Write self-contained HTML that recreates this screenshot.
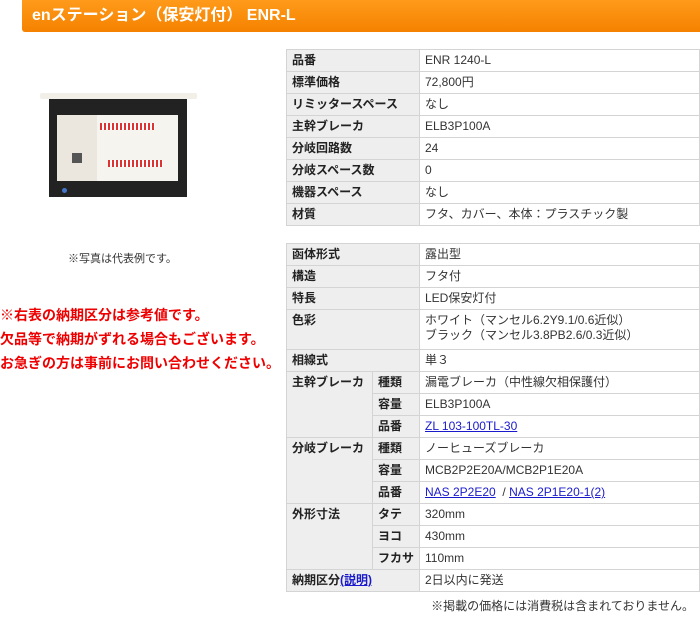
<!DOCTYPE html>
<html><head><meta charset="utf-8"><style>
body{margin:0;width:700px;height:626px;background:#fff;font-family:"Liberation Sans","Noto Sans CJK JP",sans-serif;position:relative;overflow:hidden}
.hd{position:absolute;left:22px;top:0;width:678px;height:32px;background:linear-gradient(#ff9a1a,#f58200);border-radius:0 0 0 3px;color:#fff;font-weight:bold;font-size:16px;line-height:32px;padding-left:10px;box-sizing:border-box}
table{position:absolute;border-collapse:collapse;font-size:12px;color:#333}
td{border:1px solid #d4d4d4;padding:0 5px;height:21px;vertical-align:top;line-height:21px}
td.l{background:#eee;font-weight:bold;color:#222}
a{color:#1a1acc;text-decoration:underline}
.red{position:absolute;left:0;color:#e00;font-weight:bold;font-size:14px;line-height:24px;top:303px}
.note{position:absolute;font-size:11px;color:#333}
</style></head><body>
<div class="hd">enステーション（保安灯付） ENR-L</div>

<div style="position:absolute;left:40px;top:93px;width:157px;height:6px;background:#f1efe8;border-radius:2px"></div>
<div style="position:absolute;left:49px;top:99px;width:138px;height:98px;background:#222"></div>
<div style="position:absolute;left:57px;top:115px;width:121px;height:66px;background:#ebe7de"></div>
<div style="position:absolute;left:97px;top:115px;width:81px;height:66px;background:#f6f4ef"></div>
<div style="position:absolute;left:100px;top:123px;width:55px;height:7px;background:repeating-linear-gradient(90deg,#d33 0 2px,#fff 2px 4px)"></div>
<div style="position:absolute;left:108px;top:160px;width:55px;height:7px;background:repeating-linear-gradient(90deg,#d33 0 2px,#fff 2px 4px)"></div>
<div style="position:absolute;left:72px;top:153px;width:10px;height:10px;background:#555"></div>
<div style="position:absolute;left:62px;top:188px;width:5px;height:5px;border-radius:50%;background:#47c"></div>
<div class="note" style="left:68px;top:250px">※写真は代表例です。</div>

<div class="red">※右表の納期区分は参考値です。<br>欠品等で納期がずれる場合もございます。<br>お急ぎの方は事前にお問い合わせください。</div>

<table style="left:286px;top:49px;width:414px">
<tr><td class="l" style="width:122px">品番</td><td>ENR 1240-L</td></tr>
<tr><td class="l">標準価格</td><td>72,800円</td></tr>
<tr><td class="l">リミッタースペース</td><td>なし</td></tr>
<tr><td class="l">主幹ブレーカ</td><td>ELB3P100A</td></tr>
<tr><td class="l">分岐回路数</td><td>24</td></tr>
<tr><td class="l">分岐スペース数</td><td>0</td></tr>
<tr><td class="l">機器スペース</td><td>なし</td></tr>
<tr><td class="l">材質</td><td>フタ、カバー、本体：プラスチック製</td></tr>
</table>

<table style="left:286px;top:243px;width:414px">
<tr><td class="l" colspan="2" style="width:122px">函体形式</td><td>露出型</td></tr>
<tr><td class="l" colspan="2">構造</td><td>フタ付</td></tr>
<tr><td class="l" colspan="2">特長</td><td>LED保安灯付</td></tr>
<tr><td class="l" colspan="2" style="height:39px">色彩</td><td style="line-height:15px;padding-top:3px">ホワイト（マンセル6.2Y9.1/0.6近似）<br>ブラック（マンセル3.8PB2.6/0.3近似）</td></tr>
<tr><td class="l" colspan="2">相線式</td><td>単３</td></tr>
<tr><td class="l" rowspan="3" style="width:75px">主幹ブレーカ</td><td class="l" style="width:36px">種類</td><td>漏電ブレーカ（中性線欠相保護付）</td></tr>
<tr><td class="l">容量</td><td>ELB3P100A</td></tr>
<tr><td class="l">品番</td><td><a>ZL 103-100TL-30</a></td></tr>
<tr><td class="l" rowspan="3">分岐ブレーカ</td><td class="l">種類</td><td>ノーヒューズブレーカ</td></tr>
<tr><td class="l">容量</td><td>MCB2P2E20A/MCB2P1E20A</td></tr>
<tr><td class="l">品番</td><td><a>NAS 2P2E20</a> &nbsp;/ <a>NAS 2P1E20-1(2)</a></td></tr>
<tr><td class="l" rowspan="3">外形寸法</td><td class="l">タテ</td><td>320mm</td></tr>
<tr><td class="l">ヨコ</td><td>430mm</td></tr>
<tr><td class="l">フカサ</td><td>110mm</td></tr>
<tr><td class="l" colspan="2">納期区分<a>(説明)</a></td><td>2日以内に発送</td></tr>
</table>
<div class="note" style="right:6px;top:597px;font-size:12px">※掲載の価格には消費税は含まれておりません。</div>
</body></html>
